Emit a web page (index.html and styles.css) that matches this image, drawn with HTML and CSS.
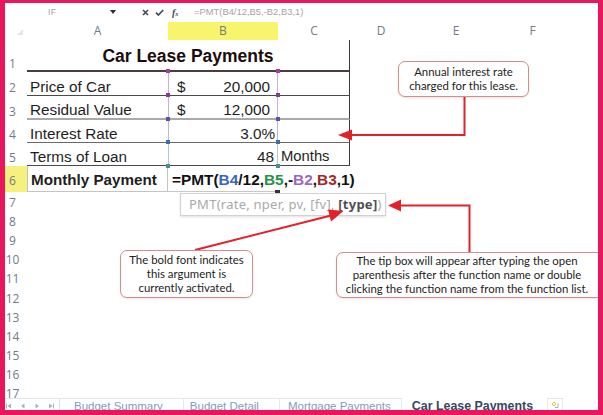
FILE: index.html
```html
<!DOCTYPE html>
<html>
<head>
<meta charset="utf-8">
<title>Car Lease Payments</title>
<link rel="stylesheet" href="styles.css">
</head>
<body>
<div class="page">
  <div class="screen">
    <div class="fbar">
      <span class="namebox">IF</span>
      <span class="dd"></span>
      <svg class="ic ic-x" width="7" height="7" viewBox="0 0 7 7"><path d="M1 1L6 6M6 1L1 6" stroke="#3d4b5a" stroke-width="1.6" fill="none"/></svg>
      <svg class="ic ic-ok" width="9" height="7" viewBox="0 0 9 7"><path d="M1 3.6L3.4 6L8.2 1" stroke="#3d4b5a" stroke-width="1.7" fill="none"/></svg>
      <span class="fx">f<span class="fxs">x</span></span>
      <span class="ftext">=PMT(B4/12,B5,-B2,B3,1)</span>
    </div>

    <div class="sheet">
      <div class="row hdr">
        <div class="corner"><span class="tri"></span></div>
        <div class="ch">A</div>
        <div class="ch sel">B</div>
        <div class="ch">C</div>
        <div class="ch">D</div>
        <div class="ch">E</div>
        <div class="ch">F</div>
      </div>

      <div class="row r1">
        <div class="rn">1</div>
        <div class="title">Car Lease Payments</div>
      </div>

      <div class="row r2">
        <div class="rn">2</div>
        <div class="c a">Price of Car</div>
        <div class="c b k2"><span>$</span><span>20,000</span></div>
        <div class="c cc"></div>
      </div>

      <div class="row r3">
        <div class="rn">3</div>
        <div class="c a">Residual Value</div>
        <div class="c b k3"><span>$</span><span>12,000</span></div>
        <div class="c cc"></div>
      </div>

      <div class="row r4">
        <div class="rn">4</div>
        <div class="c a">Interest Rate</div>
        <div class="c b k4 right pct"><span>3.0%</span></div>
        <div class="c cc"></div>
      </div>

      <div class="row r5">
        <div class="rn">5</div>
        <div class="c a">Terms of Loan</div>
        <div class="c b k5 right num"><span>48</span><i class="kb kbl"></i><i class="kb kbr"></i></div>
        <div class="c cc months">Months</div>
      </div>

      <div class="row r6">
        <div class="rn hl">6</div>
        <div class="c a6">Monthly Payment</div>
        <div class="c b6">=PMT(<span class="rb4">B4</span>/12,<span class="rb5">B5</span>,-<span class="rb2">B2</span>,<span class="rb3">B3</span>,1)</div>
      </div>

      <div class="row re"><div class="rn">7</div></div>
      <div class="row re"><div class="rn">8</div></div>
      <div class="row re"><div class="rn">9</div></div>
      <div class="row re"><div class="rn">10</div></div>
      <div class="row re"><div class="rn">11</div></div>
      <div class="row re"><div class="rn">12</div></div>
      <div class="row re"><div class="rn">13</div></div>
      <div class="row re"><div class="rn">14</div></div>
      <div class="row re"><div class="rn">15</div></div>
      <div class="row re"><div class="rn">16</div></div>
      <div class="row re"><div class="rn">17</div></div>
    </div>

    <div class="tabs">
      <div class="nav">
        <svg width="6" height="6" viewBox="0 0 6 6"><path d="M0.5 0.5V5.5" stroke="#a9b3bd" stroke-width="1"/><path d="M5 0.5L1.5 3L5 5.5Z" fill="#a9b3bd"/></svg>
        <svg width="6" height="6" viewBox="0 0 6 6"><path d="M4.5 0.5L1 3L4.5 5.5Z" fill="#a9b3bd"/></svg>
        <svg width="6" height="6" viewBox="0 0 6 6"><path d="M1.5 0.5L5 3L1.5 5.5Z" fill="#a9b3bd"/></svg>
        <svg width="6" height="6" viewBox="0 0 6 6"><path d="M1 0.5L4.5 3L1 5.5Z" fill="#a9b3bd"/><path d="M5.5 0.5V5.5" stroke="#a9b3bd" stroke-width="1"/></svg>
      </div>
      <div class="tab t1">Budget Summary</div>
      <div class="tab t2">Budget Detail</div>
      <div class="tab t3">Mortgage Payments</div>
      <div class="tab active">Car Lease Payments</div>
      <div class="tab newsheet"><svg width="9" height="9" viewBox="0 0 9 9"><circle cx="3" cy="3" r="1.6" fill="none" stroke="#e8c33a" stroke-width="1"/><path d="M7 2.5V6.5H4" stroke="#9fb0c0" stroke-width="1" fill="none"/></svg></div>
    </div>

    <div class="tip">PMT(rate, nper, pv, [fv], <b>[type]</b>)</div>

    <svg class="arrows" width="593" height="407" viewBox="5 3 593 407">
      <polyline points="464.5,97 464.5,135 351,135" fill="none" stroke="#e2222b" stroke-width="2"/>
      <polygon points="338,135 352,129.5 352,140.5" fill="#e2222b"/>
      <line x1="195" y1="250" x2="333" y2="215" stroke="#e2222b" stroke-width="2"/>
      <polygon points="343.5,211 331,221.5 328,209.5" fill="#e2222b"/>
      <polyline points="469.5,252 469.5,205.5 399,205.5" fill="none" stroke="#e2222b" stroke-width="2"/>
      <polygon points="388,205.5 401,199.5 401,211.5" fill="#e2222b"/>
    </svg>

    <div class="callout co1">Annual interest rate<br>charged for this lease.</div>
    <div class="callout co2">The bold font indicates<br>this argument is<br>currently activated.</div>
    <div class="callout co3">The tip box will appear after typing the open<br>parenthesis after the function name or double<br>clicking the function name from the function list.</div>
  </div>
</div>
</body>
</html>
```

FILE: styles.css
```css
* { box-sizing: border-box; margin: 0; padding: 0; }

body {
  margin: 0;
  width: 603px;
  height: 415px;
  overflow: hidden;
  background: #e8175d;
}

.page {
  width: 603px;
  height: 415px;
  padding: 3px 5px 5px 5px;
  background: #e8175d;
}

.screen {
  position: relative;
  width: 593px;
  height: 407px;
  background: #ffffff;
  overflow: hidden;
  display: flex;
  flex-direction: column;
  font-family: "Liberation Sans", Arial, sans-serif;
  color: #1e1e1e;
}

/* formula bar */
.fbar {
  height: 18px;
  flex: none;
  display: flex;
  align-items: center;
  font-size: 9px;
  color: #a3a3a3;
}
.namebox { margin-left: 43px; width: 62px; font-size: 8.5px; letter-spacing: 0.5px; }
.dd {
  width: 0; height: 0;
  border-left: 3.5px solid transparent;
  border-right: 3.5px solid transparent;
  border-top: 4px solid #2e2e2e;
}
.ic { display: block; flex: none; }
.ic-x { margin-left: 26px; }
.ic-ok { margin-left: 6px; }
.fx {
  margin-left: 8px;
  width: 10px;
  font-family: "Liberation Serif", serif;
  font-style: italic;
  font-weight: bold;
  font-size: 10px;
  color: #3d4b5a;
}
.fxs { font-size: 6px; }
.ftext { margin-left: 12px; font-size: 9.3px; color: #a3a3a3; letter-spacing: 0.05px; }

/* sheet grid */
.sheet {
  flex: 1;
  min-height: 0;
  overflow: hidden;
}
.row {
  display: grid;
  grid-template-columns: 22px 141px 110px 72px 62px 88px 65px 1fr;
}
.hdr { height: 19px; }
.r1 { height: 32px; }
.r2, .r3 { height: 24px; }
.r4, .r5 { height: 23px; }
.r6 { height: 26px; }
.re { height: 19.1px; }

.corner {
  display: flex;
  align-items: center;
  justify-content: flex-end;
  padding-right: 4px;
}
.tri {
  width: 0; height: 0;
  border-left: 6px solid transparent;
  border-bottom: 6px solid #dfe6ed;
  margin-top: 3px;
}
.ch {
  font-family: "Open Sans", sans-serif;
  font-size: 12px;
  color: #727c86;
  text-align: center;
  line-height: 19px;
}
.ch.sel { background: #f8f46c; margin-top: 1px; line-height: 18px; }

.rn {
  font-family: "Open Sans", sans-serif;
  font-size: 12px;
  line-height: 16px;
  color: #6f7c88;
  display: flex;
  align-items: flex-end;
  justify-content: center;
  padding-right: 7px;
}
.rn.hl { background: #f6f17c; padding-bottom: 3px; }

.title {
  grid-column: 2 / 5;
  display: flex;
  align-items: center;
  justify-content: center;
  font-size: 17.5px;
  font-weight: bold;
  color: #1c0d0d;
  border-bottom: 2px solid #4d3c3c;
  border-right: 1px solid #3a3a3a;
  padding-top: 2px;
}

.c {
  font-size: 15.3px;
  line-height: 17px;
  display: flex;
  align-items: flex-end;
  white-space: nowrap;
  padding: 0 3px 0 3px;
  border-bottom: 1px solid #4a4a4a;
}
.r3 .c { border-bottom: 2px solid #a9a9a9; }
.r4 .c { border-bottom: 1px solid #6a6a6a; }

.cc { border-right: 1px solid #3a3a3a; }
.months { padding-left: 3px; font-size: 14.8px; }

.b {
  position: relative;
  justify-content: space-between;
  padding: 0 7px 0 8px;
  border-left: 1px solid #cdb2d6;
  border-right: 1px solid #cdb2d6;
}
.b.right { justify-content: flex-end; }
.b.pct { padding-right: 2px; }
.b.num { padding-right: 3px; }
.k3 { border-left-color: #c9b3cf; border-right-color: #c9b3cf; }
.k4 { border-left-color: #b4bde0; border-right-color: #b4bde0; }
.k5 { border-left-color: #aacdd2; border-right-color: #aacdd2; }

.b::before, .b::after, .kb {
  content: "";
  position: absolute;
  width: 4px;
  height: 4px;
  background: #a13ea1;
}
.b::before { left: -3px; top: -3px; }
.b::after { right: -3px; top: -3px; }
.k3::before, .k3::after { background: #833d8e; }
.k4::before, .k4::after { background: #5b4fb2; }
.k5::before, .k5::after { background: #3f6fa8; }
.kb { background: #4c8e98; bottom: -3px; }
.kbl { left: -3px; }
.kbr { right: -3px; }

.a6 {
  font-weight: bold;
  font-size: 15.2px;
  padding-bottom: 3px;
  border: 1px solid #c4c4c4;
  border-top: none;
}
.b6 {
  position: relative;
  z-index: 1;
  font-weight: bold;
  font-size: 15.4px;
  padding: 0 0 3px 4px;
  border-bottom: 1px solid #c8c8c8;
  overflow: visible;
  color: #111;
}
.b6::after {
  content: "";
  position: absolute;
  right: -2px;
  bottom: -2px;
  width: 5px;
  height: 3px;
  background: #333;
}
.rb4 { color: #3a63c4; }
.rb5 { color: #1f9149; }
.rb2 { color: #9866c6; }
.rb3 { color: #a3282a; }

/* sheet tabs */
.tabs {
  height: 12px;
  flex: none;
  display: flex;
  align-items: stretch;
  font-size: 11.5px;
  line-height: 13px;
  color: #809cba;
  overflow: hidden;
  white-space: nowrap;
}
.nav {
  width: 55px;
  display: flex;
  align-items: center;
  gap: 8px;
  padding-left: 1px;
  border-top: 1px solid #e3e7ec;
  border-right: 1px solid #dde2e7;
}
.nav svg { display: block; margin-top: 2px; }
.tab {
  padding-top: 1px;
  border-top: 1px solid #e3e7ec;
  border-right: 1px solid #e6eaee;
}
.t1 { padding-left: 14px; padding-right: 20px; }
.t2 { padding-left: 6px; padding-right: 20px; }
.t3 { padding-left: 8px; padding-right: 10px; }
.active {
  border-top: none;
  border-right: none;
  padding: 2px 14px 0 10px;
  color: #34485d;
  font-weight: bold;
  font-size: 12.4px;
}
.newsheet {
  padding: 2px 2px 0 3px;
  border-left: 1px solid #e6eaee;
}
.newsheet svg { display: block; }

/* overlays */
.tip {
  position: absolute;
  left: 175px;
  top: 190px;
  width: 206px;
  height: 23px;
  padding-left: 8px;
  background: #fff;
  border: 1px solid #d2d2d2;
  box-shadow: 0 1px 2px rgba(0, 0, 0, 0.12);
  font-family: "Noto Sans", sans-serif;
  font-size: 13px;
  line-height: 21px;
  letter-spacing: 0.25px;
  color: #a9a9a9;
  white-space: nowrap;
  z-index: 2;
}
.tip b { color: #4f4f4f; font-weight: bold; }

.arrows {
  position: absolute;
  left: 0;
  top: 0;
  z-index: 3;
  pointer-events: none;
}

.callout {
  position: absolute;
  display: flex;
  align-items: center;
  justify-content: center;
  text-align: center;
  background: #fff;
  border: 1px solid #d68b90;
  border-radius: 7px;
  box-shadow: 0 1px 2px rgba(160, 60, 60, 0.15);
  font-family: Lato, "Open Sans", sans-serif;
  font-size: 11.4px;
  line-height: 14px;
  color: #1d1d1d;
  white-space: nowrap;
  z-index: 4;
}
.co1 { left: 393px; top: 58px; width: 131px; height: 36px; }
.co2 { left: 115px; top: 247px; width: 133px; height: 48px; }
.co3 { left: 331px; top: 249px; width: 268px; height: 46px; padding-right: 6px; }
```
